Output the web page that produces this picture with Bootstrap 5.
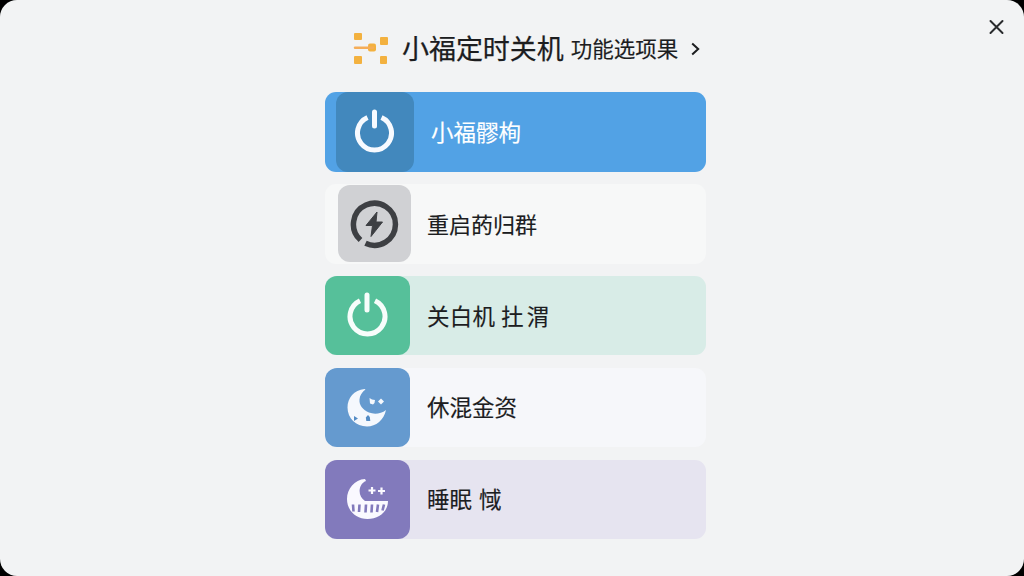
<!DOCTYPE html>
<html lang="zh-CN">
<head>
<meta charset="utf-8">
<meta name="viewport" content="width=device-width, initial-scale=1">
<title>小福定时关机</title>
<link href="https://cdn.jsdelivr.net/npm/bootstrap@5.3.0/dist/css/bootstrap.min.css" rel="stylesheet">
<style>
html, body { height: 100%; background: #000; }
body { font-family: "Noto Sans CJK SC", sans-serif; color: #1c1d1f; overflow: hidden; }
.dialog-panel { height: 576px; background: #f2f3f4; border-radius: 17px; }
.panel-head { height: 92px; padding: 5px 0 0 353px; }
.app-title { font-size: 27px; line-height: 40px; margin: 0 7px 2px 14px; letter-spacing: -.05px; -webkit-text-stroke: .25px currentColor; }
.app-sub { font-size: 21.5px; line-height: 40px; margin-bottom: 2px; -webkit-text-stroke: .15px currentColor; }
.head-arrow { margin-left: 13px; }
.close-button { top: 19px; right: 20px; width: 16px; height: 16px; line-height: 0; }
.option-list { width: 381px; margin-left: 325px; gap: 12.2px; }
.option { height: 79.700px; border-radius: 11px; background: #f7f8f8; color: inherit; text-align: left; }
.option-tile { width: 85px; height: 100%; border-radius: 12px; flex: none; margin-right: 17px; padding-bottom: 2px; }
.option-label { font-size: 22.5px; line-height: 32px; padding-bottom: 2px; white-space: pre; -webkit-text-stroke: .15px currentColor; }
.opt-power { background: #52a2e5; color: #fff; }
.opt-power .option-tile { width: 78px; margin-left: 11px; background: #4288bd; }
.opt-restart .option-tile { width: 73px; height: 77px; margin: 0 16px 0 13px; padding: 0 1px 0 0; background: #d0d1d4; color: #3d3f43; }
.opt-restart .option-label { font-size: 22px; }
.opt-off { background: #d8ece7; }
.opt-off .option-tile { background: #56c09a; }
.opt-off .option-label { letter-spacing: .2px; word-spacing: 1px; }
.opt-off .wide-glyph { letter-spacing: 3px; }
.opt-rest { background: #f6f7fa; }
.opt-rest .option-tile { background: #659acf; padding: 1px 1px 0 0; }
.opt-sleep { background: #e6e4f0; }
.opt-sleep .option-tile { background: #827abc; padding: 0 1px 0 0; }
.opt-sleep .option-label { word-spacing: 2px; }
</style>
</head>
<body>
<main class="dialog-panel position-relative">
  <header class="panel-head d-flex align-items-center">
    <svg width="35" height="34" viewBox="0 0 35 34" fill="#f3b13f"><rect x="1" y="1" width="8" height="7" rx="1"/><rect x="27" y="5" width="8" height="8" rx="1"/><rect x="1" y="24" width="8" height="8" rx="1"/><rect x="27" y="24" width="7" height="8" rx="1"/><rect x="15" y="11.500" width="8" height="8" rx="2"/><path d="M2 15.800h18" stroke="#f5ad58" stroke-width="2.400" stroke-linecap="round"/></svg>
    <h1 class="app-title fw-normal">小福定时关机</h1>
    <span class="app-sub">功能选项果</span>
    <svg class="head-arrow" width="9" height="14" viewBox="0 0 9 14" fill="none" stroke="#1c1d1f" stroke-width="2"><path d="M1.200 1.500 7.200 7l-6 5.500"/></svg>
    <button class="close-button btn p-0 border-0 position-absolute" aria-label="关闭"><svg width="16" height="16" fill="none" stroke="#292b2d" stroke-width="2" stroke-linecap="round"><path d="m2.500 2 12 12M14.500 2l-12 12"/></svg></button>
  </header>
  <div class="option-list d-flex flex-column">
    <button class="option opt-power btn p-0 border-0 d-flex align-items-center">
      <span class="option-tile d-flex align-items-center justify-content-center"><svg width="42" height="46" viewBox="0 0 42 46" fill="none" stroke="#f7faff"><path d="M13.500 9.500A17 17 0 1 0 27.500 9.500" stroke-width="5"/><path d="M20.500 4v14" stroke-width="5" stroke-linecap="round"/></svg></span>
      <span class="option-label">小福髎栒</span>
    </button>
    <button class="option opt-restart btn p-0 border-0 d-flex align-items-center">
      <span class="option-tile d-flex align-items-center justify-content-center"><svg width="50" height="50" viewBox="0 0 50 50"><path d="M11.500 41A21 21 0 1 1 16.500 44.300" fill="none" stroke="currentColor" stroke-width="5.500"/><path d="M28 13 17 26.500h6.500L22 37.500 33.500 23H27z" fill="currentColor" stroke="currentColor" stroke-linejoin="round"/></svg></span>
      <span class="option-label">重启菂归群</span>
    </button>
    <button class="option opt-off btn p-0 border-0 d-flex align-items-center">
      <span class="option-tile d-flex align-items-center justify-content-center"><svg width="42" height="46" viewBox="0 0 42 46" fill="none" stroke="#f7fdfb"><path d="M13 8.700A17.500 17.500 0 1 0 28 8.700" stroke-width="5"/><path d="M20 3v15" stroke-width="5" stroke-linecap="round"/></svg></span>
      <span class="option-label">关白机 <span class="wide-glyph">扗</span>渭</span>
    </button>
    <button class="option opt-rest btn p-0 border-0 d-flex align-items-center">
      <span class="option-tile d-flex align-items-center justify-content-center"><svg width="42" height="42" viewBox="0 0 42 42"><path d="M18.500 2C8 3 1.500 11 1.500 20.500 1.500 31 10 39.500 21 39.500c9 0 17-6.500 19-16.500-5 4-12 4.500-17 2.500-6-2.500-10-7-9.500-13 .3-4 2.500-7.500 6-10z" fill="#f5f8fd"/><g fill="#f5f8fd"><path d="m23.500 11 2.500 1.500 3 .5-.5 3-1.500 1.500-3-1z"/><path d="m35 11.500 3 3-3 3-3-3z"/></g><path d="m8 29 4 2.500L8 34zM22 28l1.800 2 .5 4h-4l-.5-3.500z" fill="#548cc5"/></svg></span>
      <span class="option-label">休混金资</span>
    </button>
    <button class="option opt-sleep btn p-0 border-0 d-flex align-items-center">
      <span class="option-tile d-flex align-items-center justify-content-center"><svg width="42" height="42" viewBox="0 0 42 42"><path d="M19 1C8.500 1.500 1 11 1 21c0 11.500 9 20 20.500 20C33 41 42 33.500 42 23H19C14 20 12 13 15 7.500c1-2 2.500-3.500 5-4.500z" fill="#faf9ff"/><path d="M26 9v7M22.500 12.500h7M35.500 9.500v7M32 13h7" stroke="#faf9ff" stroke-width="2.200"/><path d="m7 26.500.5 7M13.500 26.500 13 34M20 26.500l-.5 8M26 26.500l-.5 8M32 26.500l-1 7.500M38 26.500l-1.500 6" stroke="#827abc" stroke-width="2.600"/></svg></span>
      <span class="option-label">睡眠 惐</span>
    </button>
  </div>
</main>
<script src="https://cdn.jsdelivr.net/npm/bootstrap@5.3.0/dist/js/bootstrap.bundle.min.js"></script>
</body>
</html>
